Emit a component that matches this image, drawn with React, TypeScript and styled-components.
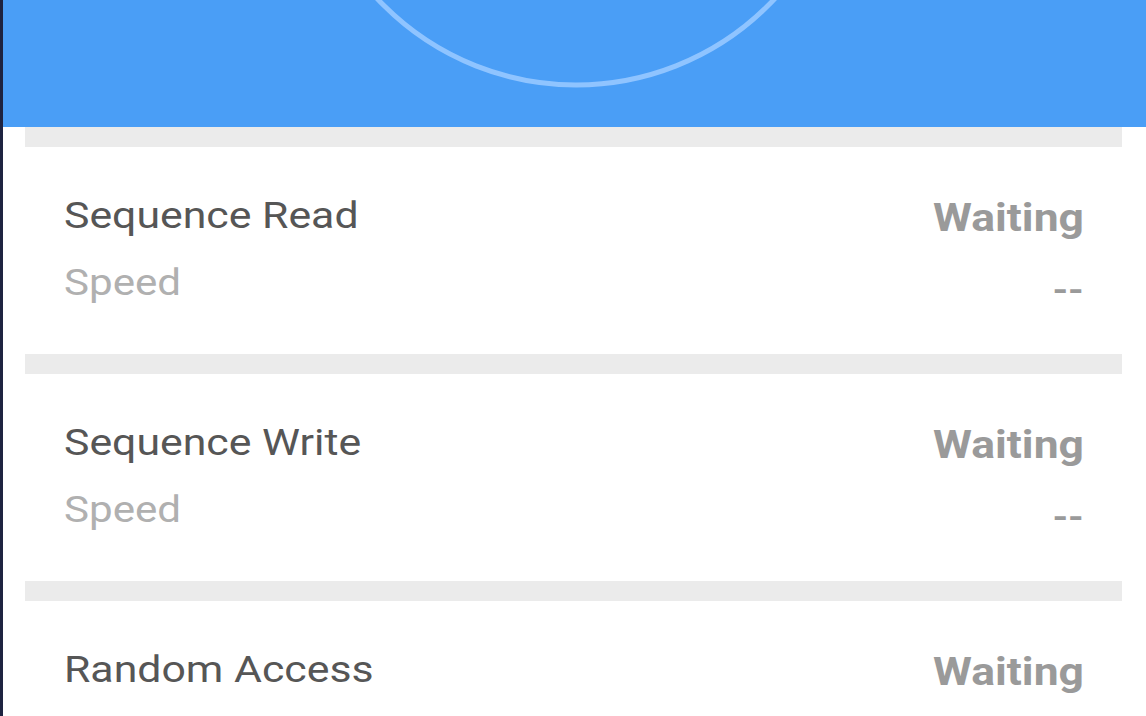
import React from "react";
import styled, { createGlobalStyle } from "styled-components";

const Global = createGlobalStyle`
  html, body { margin: 0; padding: 0; background: #ffffff; }
  body { font-family: Roboto, "Noto Sans", Arial, sans-serif; overflow: hidden; }
`;

const Frame = styled.div`
  width: 1146px;
  height: 716px;
  box-sizing: border-box;
  border-left: 3px solid #1e2340;
  background: #ffffff;
  overflow: hidden;
  display: flex;
  flex-direction: column;
`;

const Header = styled.div`
  position: relative;
  height: 127px;
  flex: none;
  background: #4a9ef6;
  overflow: hidden;
`;

const Ring = styled.svg`
  position: absolute;
  left: 300px;
  top: -462px;
`;

const Divider = styled.div`
  height: 20px;
  flex: none;
  margin: 0 24px 0 22px;
  background: #ebebeb;
`;

const Card = styled.div`
  height: 207px;
  flex: none;
  box-sizing: border-box;
  padding: 48px 62px 0 61px;
  display: flex;
  flex-direction: column;
  gap: 25px;
`;

const Line = styled.div`
  display: flex;
  justify-content: space-between;
  align-items: flex-start;
  height: 42px;
`;

const Text = styled.span<{ $end?: boolean }>`
  display: inline-block;
  line-height: 42px;
  transform: scaleX(1.17);
  transform-origin: ${(p) => (p.$end ? "right" : "left")} center;
  white-space: nowrap;
`;

const Title = styled(Text)`
  font-size: 36.6px;
  color: #565656;
`;

const Sub = styled(Text)`
  font-size: 36px;
  color: #b0b0b0;
`;

const Status = styled(Text)`
  font-size: 38px;
  font-weight: 700;
  color: #9a9a9a;
  margin-top: 2px;
`;

const Value = styled(Text)`
  font-size: 34px;
  font-weight: 700;
  color: #9a9a9a;
  margin-top: 6px;
`;

const tests = ["Sequence Read", "Sequence Write", "Random Access"];

export default function App() {
  return (
    <>
      <Global />
      <Frame>
        <Header>
          <Ring width="546" height="550" viewBox="0 0 546 550">
            <circle cx="273" cy="275" r="272" fill="none" stroke="#8fc4ff" strokeWidth="5" />
          </Ring>
        </Header>
        {tests.map((t) => (
          <React.Fragment key={t}>
            <Divider />
            <Card>
              <Line>
                <Title>{t}</Title>
                <Status $end>Waiting</Status>
              </Line>
              <Line>
                <Sub>Speed</Sub>
                <Value $end>--</Value>
              </Line>
            </Card>
          </React.Fragment>
        ))}
      </Frame>
    </>
  );
}
